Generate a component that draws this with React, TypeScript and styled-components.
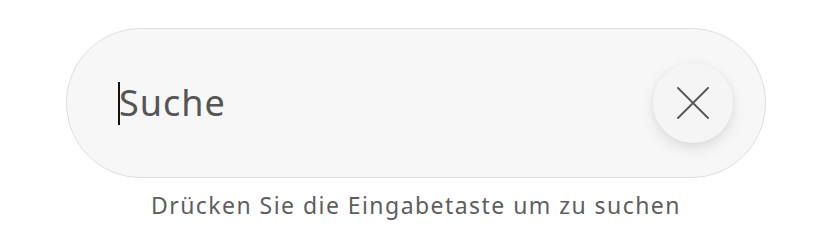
import React from "react";
import styled, { createGlobalStyle } from "styled-components";

const Global = createGlobalStyle`
  html, body { margin: 0; padding: 0; background: #ffffff; }
  body { font-family: "Noto Sans", "Open Sans", sans-serif; }
`;

const Page = styled.div`
  display: flex;
  flex-direction: column;
  align-items: center;
  padding: 28px 0 0 8px;
  width: 824px;
  box-sizing: border-box;
`;

const SearchBar = styled.div`
  box-sizing: border-box;
  width: 700px;
  height: 150px;
  border: 1.5px solid #dedede;
  border-radius: 75px;
  background: #f7f7f7;
  display: flex;
  align-items: center;
  padding: 0 32px 0 51px;
`;

const Field = styled.div`
  flex: 1;
  display: flex;
  align-items: center;
  font-size: 36px;
  letter-spacing: 1px;
  color: #555555;
  line-height: 1;
`;

const Caret = styled.span`
  display: inline-block;
  width: 2px;
  height: 43px;
  background: #111111;
  margin-right: -1px;
`;

const ClearButton = styled.button`
  width: 80px;
  height: 80px;
  border-radius: 50%;
  border: none;
  background: #f5f5f5;
  box-shadow: 0 6px 14px rgba(0, 0, 0, 0.1), 0 0 10px rgba(0, 0, 0, 0.03);
  display: flex;
  align-items: center;
  justify-content: center;
  padding: 0;
  cursor: pointer;
`;

const Hint = styled.div`
  margin-top: 14px;
  font-size: 23px;
  letter-spacing: 1.45px;
  color: #5e5e5e;
  line-height: 1.2;
`;

export default function App() {
  return (
    <>
      <Global />
      <Page>
        <SearchBar>
          <Field>
            <Caret />
            <span>Suche</span>
          </Field>
          <ClearButton aria-label="Löschen">
            <svg width="32" height="32" viewBox="0 0 32 32" fill="none">
              <path d="M1 1 L31 31 M31 1 L1 31" stroke="#555555" strokeWidth="1.8" strokeLinecap="round" />
            </svg>
          </ClearButton>
        </SearchBar>
        <Hint>Drücken Sie die Eingabetaste um zu suchen</Hint>
      </Page>
    </>
  );
}
